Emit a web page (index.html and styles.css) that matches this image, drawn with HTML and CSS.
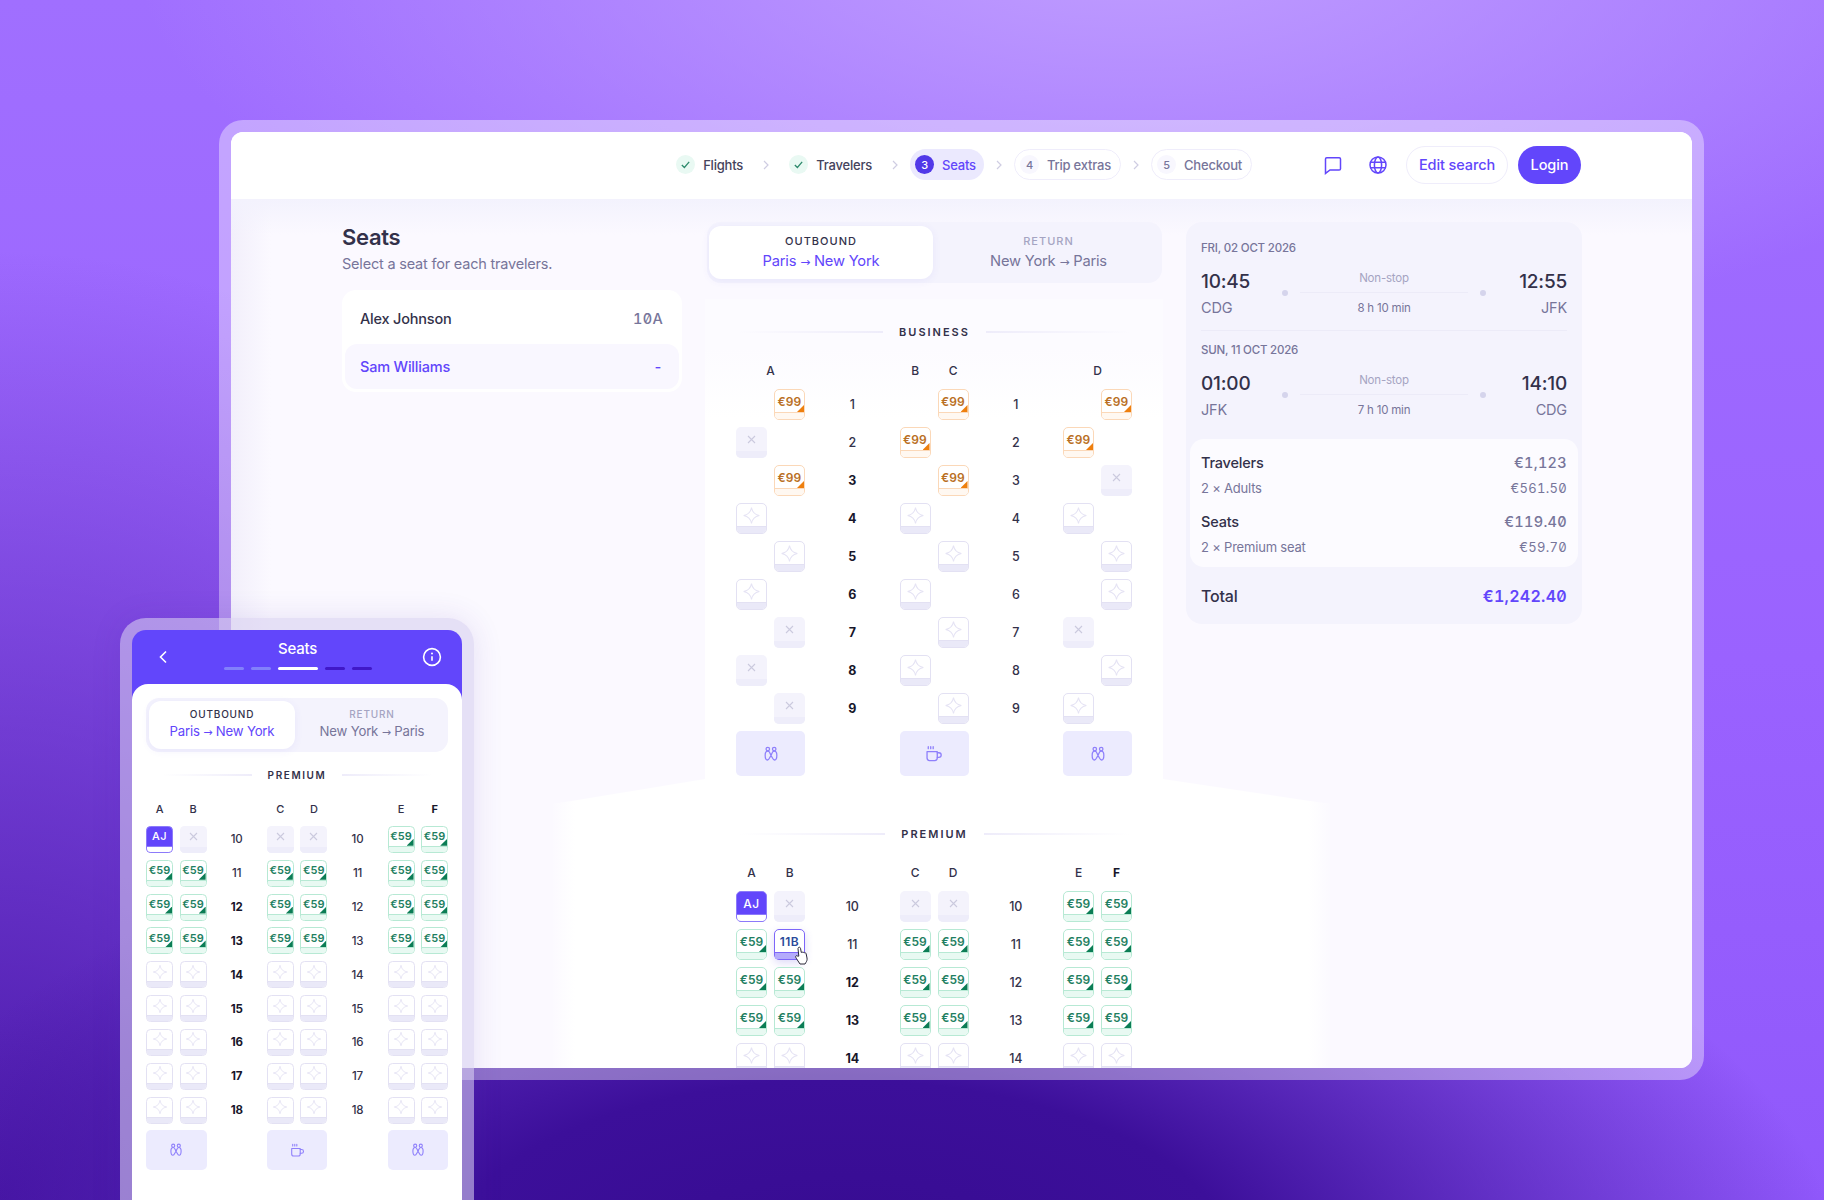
FILE: index.html
```html
<!DOCTYPE html>
<html lang="en">
<head>
    <meta charset="UTF-8">
    <meta name="viewport" content="width=device-width, initial-scale=1.0">
    <title>Seats</title>
    <link rel="stylesheet" href="styles.css">
</head>
<body>
    <div class="stage">
        <!-- desktop window -->
        <div class="window-frame">
            <div class="window">
                <header class="topbar">
                    <nav class="steps">
                        <div class="step done">
                            <span class="tick"><svg width="11" height="11" viewBox="0 0 12 12"><path d="M2 6.5l2.8 2.8L10 3.2"/></svg></span>
                            <span>Flights</span>
                        </div>
                        <svg class="chev" width="6" height="10" viewBox="0 0 6 10"><path d="M1 1l4 4-4 4"/></svg>
                        <div class="step done">
                            <span class="tick"><svg width="11" height="11" viewBox="0 0 12 12"><path d="M2 6.5l2.8 2.8L10 3.2"/></svg></span>
                            <span>Travelers</span>
                        </div>
                        <svg class="chev" width="6" height="10" viewBox="0 0 6 10"><path d="M1 1l4 4-4 4"/></svg>
                        <div class="step current">
                            <span class="step-no">3</span>
                            <span>Seats</span>
                        </div>
                        <svg class="chev" width="6" height="10" viewBox="0 0 6 10"><path d="M1 1l4 4-4 4"/></svg>
                        <div class="step todo">
                            <span class="step-no">4</span>
                            <span>Trip extras</span>
                        </div>
                        <svg class="chev" width="6" height="10" viewBox="0 0 6 10"><path d="M1 1l4 4-4 4"/></svg>
                        <div class="step todo">
                            <span class="step-no">5</span>
                            <span>Checkout</span>
                        </div>
                    </nav>
                    <div class="actions">
                        <svg class="action-icon" width="20" height="20" viewBox="0 0 20 20"><path d="M3.8 2.8h12.4a1.3 1.3 0 0 1 1.3 1.3v9.6a1.3 1.3 0 0 1-1.3 1.3H7l-4.5 3.4V4.1a1.3 1.3 0 0 1 1.3-1.3z"/></svg>
                        <svg class="action-icon" width="20" height="20" viewBox="0 0 20 20"><circle cx="10" cy="10" r="8"/><ellipse cx="10" cy="10" rx="3.6" ry="8"/><path d="M2.6 7.2h14.8M2.6 12.8h14.8"/></svg>
                        <button class="btn btn-line">Edit search</button>
                        <button class="btn btn-fill">Login</button>
                    </div>
                </header>

                <main class="content">
                    <div class="fuselage"></div>

                    <section class="travelers">
                        <h1>Seats</h1>
                        <p class="lead">Select a seat for each travelers.</p>
                        <div class="traveler-card">
                            <div class="traveler">
                                <span>Alex Johnson</span>
                                <span class="num-font">10A</span>
                            </div>
                            <div class="traveler active">
                                <span>Sam Williams</span>
                                <span class="num-font">-</span>
                            </div>
                        </div>
                    </section>

                    <section class="seatmap">
                        <div class="tabs">
                            <div class="tab active">
                                <span class="tab-label">OUTBOUND</span>
                                <span class="tab-route">Paris <span class="arrow">→</span> New York</span>
                            </div>
                            <div class="tab">
                                <span class="tab-label">RETURN</span>
                                <span class="tab-route">New York <span class="arrow">→</span> Paris</span>
                            </div>
                        </div>
                        <div class="cabin-title business-title"><span>BUSINESS</span></div>
                        <div class="deck" id="business"></div>
                        <div class="cabin-title premium-title"><span>PREMIUM</span></div>
                        <div class="deck" id="premium"></div>
                    </section>

                    <aside class="summary">
                        <div class="flight-date">FRI, 02 OCT 2026</div>
                        <div class="flight">
                            <div>
                                <div class="time">10:45</div>
                                <div class="code">CDG</div>
                            </div>
                            <div class="route">
                                <div class="nonstop">Non-stop</div>
                                <div class="route-line"><i></i><b></b><i></i></div>
                                <div class="duration">8 h 10 min</div>
                            </div>
                            <div class="end">
                                <div class="time">12:55</div>
                                <div class="code">JFK</div>
                            </div>
                        </div>
                        <div class="divider"></div>
                        <div class="flight-date second">SUN, 11 OCT 2026</div>
                        <div class="flight">
                            <div>
                                <div class="time">01:00</div>
                                <div class="code">JFK</div>
                            </div>
                            <div class="route">
                                <div class="nonstop">Non-stop</div>
                                <div class="route-line"><i></i><b></b><i></i></div>
                                <div class="duration">7 h 10 min</div>
                            </div>
                            <div class="end">
                                <div class="time">14:10</div>
                                <div class="code">CDG</div>
                            </div>
                        </div>
                        <div class="price-card">
                            <div class="price-row main"><span>Travelers</span><span class="num-font">€1,123</span></div>
                            <div class="price-row sub"><span>2 × Adults</span><span class="num-font">€561.50</span></div>
                            <div class="price-row main gap"><span>Seats</span><span class="num-font">€119.40</span></div>
                            <div class="price-row sub"><span>2 × Premium seat</span><span class="num-font">€59.70</span></div>
                        </div>
                        <div class="total"><span>Total</span><span class="num-font">€1,242.40</span></div>
                    </aside>
                </main>
            </div>
        </div>

        <!-- phone -->
        <div class="phone-frame">
            <div class="phone">
                <div class="phone-head">
                    <svg class="phone-back" width="10" height="14" viewBox="0 0 10 14"><path d="M8 1.5L2.5 7 8 12.5"/></svg>
                    <div class="phone-title">
                        <div>Seats</div>
                        <div class="progress"><i class="past"></i><i class="past"></i><i class="now"></i><i></i><i></i></div>
                    </div>
                    <svg class="phone-info" width="20" height="20" viewBox="0 0 20 20"><circle cx="10" cy="10" r="8.4"/><path d="M10 9.2v4.6"/><circle class="dot" cx="10" cy="6.4" r="1"/></svg>
                </div>
                <div class="phone-body">
                    <div class="tabs small">
                        <div class="tab active">
                            <span class="tab-label">OUTBOUND</span>
                            <span class="tab-route">Paris <span class="arrow">→</span> New York</span>
                        </div>
                        <div class="tab">
                            <span class="tab-label">RETURN</span>
                            <span class="tab-route">New York <span class="arrow">→</span> Paris</span>
                        </div>
                    </div>
                    <div class="cabin-title phone-cabin"><span>PREMIUM</span></div>
                    <div class="deck compact" id="phone-premium"></div>
                </div>
            </div>
        </div>
    </div>
    <script src="seats.js"></script>
</body>
</html>
```

FILE: styles.css
```css
:root {
    --purple: #6246fb;
    --ink: #33314a;
    --gray: #77759a;
    --light-gray: #a5a4c2;
    --panel: #f4f3fd;
}
* {
    box-sizing: border-box;
}
body {
    margin: 0;
    font-family: "Inter", "Liberation Sans", sans-serif;
    color: var(--ink);
    letter-spacing: -0.2px;
}
.stage {
    position: relative;
    width: 1824px;
    height: 1200px;
    overflow: hidden;
    background:
        radial-gradient(ellipse 1000px 480px at 46% 106%, #360b90 0%, #3c0f9a 40%, rgba(60, 15, 154, 0) 100%),
        radial-gradient(ellipse 800px 950px at 0% 100%, #4a18a8 0%, rgba(74, 24, 168, 0) 100%),
        radial-gradient(ellipse 1000px 420px at 62% -5%, #c09eff 0%, rgba(192, 158, 255, 0) 100%),
        linear-gradient(180deg, #a06fff 0%, #9a62ff 55%, #9058fb 100%);
}

/* windows on the backdrop */
.window-frame {
    position: absolute;
    left: 219px;
    top: 120px;
    width: 1485px;
    height: 960px;
    padding: 12px;
    border-radius: 24px;
    background: rgba(255, 255, 255, 0.38);
}
.window {
    height: 100%;
    border-radius: 12px;
    overflow: hidden;
    background: #fff;
    display: flex;
    flex-direction: column;
}
.phone-frame {
    position: absolute;
    left: 120px;
    top: 618px;
    width: 354px;
    height: 640px;
    padding: 12px;
    border-radius: 26px;
    background: rgba(213, 205, 240, 0.58);
    box-shadow: 0 0 30px rgba(70, 40, 170, 0.12);
}
.phone {
    height: 100%;
    border-radius: 14px;
    overflow: hidden;
    background: var(--purple);
}

/* top bar */
.topbar {
    height: 67px;
    flex: none;
    display: flex;
    align-items: center;
    justify-content: flex-end;
    padding: 0 111px 2px 0;
    background: #fff;
}
.steps {
    display: flex;
    align-items: center;
    gap: 12px;
    font-size: 13px;
    font-weight: 500;
}
.step {
    height: 31px;
    display: flex;
    align-items: center;
    gap: 8px;
    border-radius: 16px;
}
.step.done {
    padding: 0 8px;
    color: #45435c;
}
.tick {
    width: 19px;
    height: 19px;
    border-radius: 50%;
    background: #e9f9f3;
    display: flex;
    align-items: center;
    justify-content: center;
}
.tick path {
    fill: none;
    stroke: #2d8a6c;
    stroke-width: 1.4;
}
.chev path {
    fill: none;
    stroke: #cfcde2;
    stroke-width: 1.2;
}
.step-no {
    width: 19px;
    height: 19px;
    border-radius: 50%;
    display: flex;
    align-items: center;
    justify-content: center;
    font-size: 11px;
}
.step.current {
    padding: 0 8px 0 5px;
    background: #ebe9fe;
    color: var(--purple);
}
.step.current .step-no {
    background: #5138e8;
    color: #fff;
}
.step.todo {
    padding: 0 9px 0 5px;
    border: 1.5px solid #efedfb;
    color: var(--gray);
}
.step.todo .step-no {
    background: #f8f7fe;
}
.actions {
    display: flex;
    align-items: center;
    margin-left: 71px;
}
.action-icon {
    margin-right: 25px;
    fill: none;
    stroke: var(--purple);
    stroke-width: 1.5;
}
.action-icon + .btn {
    margin-left: -7px;
}
.btn {
    height: 38px;
    border-radius: 19px;
    font-family: inherit;
    font-size: 14.5px;
    font-weight: 500;
    letter-spacing: -0.1px;
}
.btn-line {
    width: 102px;
    margin-right: 10px;
    border: 1.5px solid #efedfb;
    background: #fff;
    color: var(--purple);
}
.btn-fill {
    width: 63px;
    border: none;
    background: var(--purple);
    color: #fff;
}

/* main area */
.content {
    flex: 1;
    position: relative;
    display: flex;
    align-items: flex-start;
    gap: 25px;
    padding: 23px 110px 0 111px;
    overflow: hidden;
    background:
        linear-gradient(180deg, #f3f2fd 0, rgba(243, 242, 253, 0) 36px),
        linear-gradient(90deg, #f2effb 0, rgba(242, 239, 251, 0) 40px),
        #fbf9ff;
}
.fuselage {
    position: absolute;
    left: 322px;
    top: 100px;
    width: 777px;
    height: 769px;
    clip-path: polygon(152px 0, 610px 0, 610px 480px, 777px 505px, 777px 769px, 0 769px, 0 505px, 152px 480px);
    background:
        linear-gradient(90deg, rgba(251, 249, 255, 0.9) 0, rgba(251, 249, 255, 0) 22px, rgba(251, 249, 255, 0) 755px, rgba(251, 249, 255, 0.9) 777px),
        linear-gradient(180deg, #fcfbff 0, #fcfbff 50px, #fff 120px);
}
.travelers,
.seatmap,
.summary {
    position: relative;
    flex: none;
}
.travelers {
    width: 340px;
}
.travelers h1 {
    margin: 0;
    height: 28px;
    margin-top: 1px;
    font-size: 22px;
    line-height: 28px;
    font-weight: 600;
    letter-spacing: -0.3px;
}
.lead {
    margin: 3px 0 16px;
    font-size: 14.5px;
    line-height: 20px;
    color: var(--gray);
    letter-spacing: -0.2px;
}
.traveler-card {
    padding: 3px;
    border-radius: 14px;
    background: #fff;
}
.traveler {
    height: 51px;
    padding: 0 16px 0 15px;
    display: flex;
    align-items: center;
    justify-content: space-between;
    font-size: 14.5px;
    font-weight: 500;
}
.traveler .num-font {
    color: var(--gray);
}
.traveler.active {
    height: 45px;
    border-radius: 12px;
    background: #f9f7ff;
    color: var(--purple);
}
.traveler.active .num-font {
    color: var(--purple);
}
.num-font {
    font-family: "Inter", "Liberation Sans", sans-serif;
    font-feature-settings: "tnum", "zero";
    letter-spacing: 0.3px;
}

/* outbound / return tabs */
.seatmap {
    width: 455px;
}
.tabs {
    height: 61px;
    padding: 4px 2px;
    display: flex;
    border-radius: 14px;
    background: var(--panel);
}
.tab {
    flex: 1;
    display: flex;
    flex-direction: column;
    align-items: center;
    justify-content: center;
    gap: 4px;
    padding-bottom: 1px;
    color: var(--gray);
}
.tab + .tab {
    padding-left: 4px;
}
.tab.active {
    flex: none;
    width: 224px;
    border-radius: 12px;
    background: #fff;
    box-shadow: 0 2px 8px rgba(90, 70, 220, 0.07);
    color: var(--purple);
}
.tab-label {
    font-size: 11px;
    line-height: 14px;
    font-weight: 500;
    letter-spacing: 1px;
    color: var(--light-gray);
}
.tab.active .tab-label {
    color: var(--ink);
}
.tab-route {
    font-size: 14.7px;
    line-height: 18px;
}
.arrow {
    font-family: "DejaVu Sans", sans-serif;
    font-size: 12px;
}
.tabs.small {
    height: 54px;
    padding: 3px;
    border-radius: 13px;
}
.tabs.small .tab {
    gap: 3px;
}
.tabs.small .tab.active {
    width: 146px;
}
.tabs.small .tab-label {
    font-size: 10px;
    line-height: 12px;
    letter-spacing: 0.8px;
}
.tabs.small .tab-route {
    font-size: 13.2px;
    line-height: 17px;
}
.tabs.small .arrow {
    font-size: 11px;
}

/* cabin title */
.cabin-title {
    height: 14px;
    display: flex;
    align-items: center;
    justify-content: center;
    gap: 16px;
    font-size: 11px;
    font-weight: 600;
    letter-spacing: 2px;
}
.cabin-title::before,
.cabin-title::after {
    content: "";
    width: 145px;
    height: 1.5px;
}
.cabin-title::before {
    background: linear-gradient(90deg, rgba(238, 236, 250, 0), #eeecfa);
}
.cabin-title::after {
    background: linear-gradient(90deg, #eeecfa, rgba(238, 236, 250, 0));
}
.business-title {
    margin-top: 42px;
    margin-bottom: 19px;
}
.premium-title {
    margin-top: 51px;
    margin-bottom: 19px;
}
.phone-cabin {
    margin: 16px 0 17px;
    font-size: 10px;
    letter-spacing: 1.6px;
}
.phone-cabin::before,
.phone-cabin::after {
    width: 90px;
}

/* seat grid */
.deck {
    width: 396px;
    margin-left: 29px;
    display: grid;
    grid-template-columns: 31px 31px 80.5px 31px 31px 80.5px 31px 31px;
    gap: 7px;
}
.deck.compact {
    width: 302px;
    margin-left: 0;
    grid-template-columns: 27px 27px 47px 27px 27px 47px 27px 27px;
    column-gap: 6.6px;
    row-gap: 6.85px;
}
.letter,
.row-no {
    display: flex;
    align-items: center;
    justify-content: center;
    font-size: 12px;
    font-weight: 500;
}
.letter {
    height: 24px;
}
.compact .letter {
    height: 20px;
    font-size: 11px;
}
.row-no {
    font-size: 12.5px;
}
.compact .row-no {
    font-size: 11.5px;
}
.strong {
    color: #17162a;
    font-weight: 700;
}
.span-2 {
    grid-column: span 2;
}
.seat {
    position: relative;
    height: 31px;
    display: flex;
    flex-direction: column;
    border: 1.5px solid #e3e1f3;
    border-radius: 5px;
    background: #fff;
    overflow: hidden;
}
.seat-face {
    flex: 1;
    position: relative;
    display: flex;
    align-items: center;
    justify-content: center;
    font-size: 12px;
    font-weight: 600;
    letter-spacing: 0.1px;
}
.seat-band {
    height: 7px;
    flex: none;
    border-top: 1.5px solid #e3e1f3;
    background: #eae9f8;
}
.compact .seat {
    height: 27px;
    border-radius: 4.5px;
}
.compact .seat-band {
    height: 6px;
}
.compact .seat-face {
    font-size: 11px;
}
.star {
    width: 21px;
    height: 21px;
    fill: none;
    stroke: #e5e3f4;
    stroke-width: 1.2;
}
.compact .star {
    width: 18px;
    height: 18px;
}
.seat.taken {
    border: none;
    background: #f4f3fc;
}
.seat.taken .seat-band {
    border: none;
    background: #eeedfa;
}
.cross {
    fill: none;
    stroke: #cbcade;
    stroke-width: 1.1;
}
.seat.priced .seat-face::after {
    content: "";
    position: absolute;
    right: 0;
    bottom: 0;
    width: 7px;
    height: 7px;
    clip-path: polygon(100% 0, 100% 100%, 0 100%);
    background: currentColor;
}
.seat.orange {
    border-color: #fbd8b8;
}
.seat.orange .seat-band {
    border-color: #fbd8b8;
    background: #fff8f1;
}
.seat.orange .seat-face {
    color: #b96f24;
}
.seat.orange .seat-face::after {
    background: #ee7f0e;
}
.seat.green {
    border-color: #b7e9d4;
}
.seat.green .seat-band {
    border-color: #b7e9d4;
    background: #e8f9f2;
}
.seat.green .seat-face {
    color: #1f7f62;
}
.seat.green .seat-face::after {
    background: #0b7d55;
}
.seat.mine {
    border-color: #8c7afa;
    background: var(--purple);
}
.seat.mine .seat-band {
    border-color: #8c7afa;
    background: #fff;
}
.seat.mine .seat-face {
    color: #fff;
    font-weight: 500;
    letter-spacing: 0.5px;
}
.seat.hover {
    border-color: #7d66f9;
    box-shadow: 0 3px 8px rgba(90, 70, 220, 0.2);
    overflow: visible;
}
.seat.hover .seat-band {
    border-color: #7d66f9;
    background: #b4abfb;
}
.seat.hover .seat-face {
    color: #2b4a9a;
    letter-spacing: 0.5px;
}
.seat-slot {
    position: relative;
}
.cursor {
    position: absolute;
    left: 20px;
    top: 17px;
}
.cursor path {
    fill: #fff;
    stroke: #2a2838;
    stroke-width: 1;
    stroke-linejoin: round;
}
.amenity {
    grid-column: span 2;
    height: 45px;
    border-radius: 5px;
    background: #ecebfe;
    display: flex;
    align-items: center;
    justify-content: center;
}
.amenity svg {
    width: 16px;
    height: 16px;
    fill: none;
    stroke: #8f80fb;
    stroke-width: 1.6;
    stroke-linecap: round;
    stroke-linejoin: round;
}
.amenity .cup {
    width: 18px;
    height: 18px;
}
.compact .amenity {
    height: 40px;
}
.compact .amenity svg {
    width: 14px;
    height: 14px;
}
.compact .amenity .cup {
    width: 15px;
    height: 15px;
}

/* trip summary */
.summary {
    width: 396px;
    margin-left: -1px;
    padding: 18px 15px 16px;
    border-radius: 16px;
    background: var(--panel);
}
.flight-date {
    height: 16px;
    margin-bottom: 14px;
    font-size: 11.5px;
    line-height: 16px;
    font-weight: 500;
    color: var(--gray);
}
.flight-date.second {
    margin-top: 11px;
}
.flight {
    display: grid;
    grid-template-columns: 1fr 204px 1fr;
}
.time {
    height: 24px;
    font-size: 19px;
    line-height: 24px;
    font-weight: 500;
}
.code {
    height: 20px;
    margin-top: 4px;
    font-size: 14.5px;
    line-height: 20px;
    color: var(--gray);
}
.end {
    text-align: right;
}
.route {
    display: flex;
    flex-direction: column;
    align-items: center;
    font-size: 11.5px;
}
.nonstop {
    height: 16px;
    line-height: 16px;
    color: var(--light-gray);
}
.route-line {
    width: 100%;
    height: 7px;
    margin-top: 3px;
    display: flex;
    align-items: center;
    gap: 12px;
}
.route-line i {
    width: 6px;
    height: 6px;
    border-radius: 50%;
    background: #d5d4ec;
}
.route-line b {
    flex: 1;
    height: 1.5px;
    background: #ecebf8;
}
.duration {
    margin-top: 3px;
    height: 18px;
    line-height: 18px;
    color: var(--gray);
}
.divider {
    height: 1px;
    margin-top: 12px;
    background: #ecebf8;
}
.price-card {
    margin: 19px -11px 0;
    padding: 14px 11px 10px;
    border-radius: 14px;
    background: #fcfbff;
}
.price-row {
    display: flex;
    justify-content: space-between;
    line-height: 20px;
}
.price-row.main {
    font-size: 14.5px;
    font-weight: 500;
}
.price-row.main .num-font {
    color: var(--gray);
}
.price-row.sub {
    margin-top: 5px;
    font-size: 13px;
    color: var(--gray);
}
.price-row.gap {
    margin-top: 14px;
}
.total {
    margin-top: 17px;
    display: flex;
    justify-content: space-between;
    font-size: 16px;
    line-height: 24px;
    font-weight: 500;
}
.total .num-font {
    color: var(--purple);
    font-weight: 600;
}

/* phone */
.phone-head {
    height: 54px;
    display: flex;
    justify-content: space-between;
    padding: 20px 20px 0 26px;
    color: #fff;
}
.phone-back path,
.phone-info path,
.phone-info circle {
    fill: none;
    stroke: #fff;
    stroke-width: 1.6;
}
.phone-info .dot {
    fill: #fff;
    stroke: none;
}
.phone-info {
    margin-top: -3px;
}
.phone-title {
    margin-top: -11px;
    margin-left: 5px;
    text-align: center;
    font-size: 15px;
    line-height: 20px;
    font-weight: 500;
}
.progress {
    margin-top: 8px;
    display: flex;
    gap: 7px;
}
.progress i {
    width: 20px;
    height: 3px;
    border-radius: 2px;
    background: #4018c8;
}
.progress .past {
    background: #8280fb;
}
.progress .now {
    width: 40px;
    background: #fff;
}
.phone-body {
    height: 600px;
    padding: 14px 14px 0;
    border-radius: 16px 16px 0 0;
    background: #fff;
}
```

FILE: seats.js
```js
// Seat maps: each row is one char per seat column (A..F)
// . = no seat, o = €99, g = €59, e = free, x = taken, s = mine, h = hovered
const businessRows = [
    ['1', '.o.o.o'], ['2', 'x.o.o.'], ['3', '.o.o.x'],
    ['4', 'e.e.e.'], ['5', '.e.e.e'], ['6', 'e.e..e'],
    ['7', '.x.ex.'], ['8', 'x.e..e'], ['9', '.x.ee.']
];
const premiumRows = [
    ['10', 'sxxxgg'], ['11', 'ghgggg'], ['12', 'gggggg'],
    ['13', 'gggggg'], ['14', 'eeeeee']
];
const phoneRows = [
    ['10', 'sxxxgg'], ['11', 'gggggg'], ['12', 'gggggg'], ['13', 'gggggg'],
    ['14', 'eeeeee'], ['15', 'eeeeee'], ['16', 'eeeeee'], ['17', 'eeeeee'], ['18', 'eeeeee']
];

// row numbers in the first aisle that are drawn heavier
const strongRows = ['3', '4', '5', '6', '7', '8', '9', '12', '13', '14', '15', '16', '17', '18'];

const starSvg = '<svg class="star" viewBox="0 0 24 24"><path d="M12 3c1 5.5 3.5 8 9 9-5.5 1-8 3.5-9 9-1-5.5-3.5-8-9-9 5.5-1 8-3.5 9-9z"/></svg>';
const crossSvg = '<svg class="cross" width="9" height="9" viewBox="0 0 9 9"><path d="M1 1l7 7M8 1l-7 7"/></svg>';
const cursorSvg = '<svg class="cursor" width="15" height="19" viewBox="0 0 15 19"><path d="M4.5 1.5c.8-.6 1.8-.2 2 .8l.8 4.2c.5-.5 1.3-.5 1.7.1.5-.4 1.3-.3 1.6.3.6-.3 1.3 0 1.5.7l.9 4.4c.3 1.7-.1 3-1 4.3l-1 1.7H6l-3.8-5.8c-.6-1-.8-1.8-.2-2.3.5-.4 1.2-.2 1.8.4l1-.2L4 2.6c-.1-.4.1-.8.5-1.1z"/></svg>';
const toiletSvg = '<svg viewBox="0 0 20 20"><circle cx="6" cy="3.8" r="2.2"/><circle cx="14" cy="3.8" r="2.2"/><path d="M6 6.5c-2.5 0-3.3 2.2-3.3 5 0 3.5.8 6 2.8 6 2.2 0 3-4 4.5-5.5 1.5 1.5 2.3 5.5 4.5 5.5 2 0 2.8-2.5 2.8-6 0-2.8-.8-5-3.3-5-2.6 0-2.8 3-4 5.5-1.2-2.5-1.4-5.5-4-5.5z"/></svg>';
const coffeeSvg = '<svg class="cup" viewBox="0 0 22 22"><path d="M4 2v2.5M7 2v2.5M10 2v2.5"/><path d="M2.5 8h12.5v8a3 3 0 0 1-3 3H5.5a3 3 0 0 1-3-3V8z"/><path d="M15 9.5h2a2.8 2.8 0 0 1 0 5.6h-2"/></svg>';

function makeSeat(type) {
    if (type === '.') return '<div></div>';
    let cls = 'seat';
    let face = '';
    if (type === 'o') { cls += ' priced orange'; face = '€99'; }
    if (type === 'g') { cls += ' priced green'; face = '€59'; }
    if (type === 'e') { face = starSvg; }
    if (type === 'x') { cls += ' taken'; face = crossSvg; }
    if (type === 's') { cls += ' mine'; face = 'AJ'; }
    if (type === 'h') {
        return '<div class="seat-slot"><div class="seat hover"><div class="seat-face">11B</div><div class="seat-band"></div></div>' + cursorSvg + '</div>';
    }
    return '<div class="' + cls + '"><div class="seat-face">' + face + '</div><div class="seat-band"></div></div>';
}

function makeRow(row) {
    const no = row[0];
    const s = row[1].split('').map(makeSeat);
    const strong = strongRows.includes(no) ? ' strong' : '';
    return s[0] + s[1] +
        '<div class="row-no' + strong + '">' + no + '</div>' +
        s[2] + s[3] +
        '<div class="row-no">' + no + '</div>' +
        s[4] + s[5];
}

function letterRow(letters) {
    return letters.map(function (l) {
        if (l === '') return '<div class="letter"></div>';
        const strong = l === 'F' ? ' strong' : '';
        return '<div class="letter' + strong + '">' + l + '</div>';
    }).join('');
}

const amenities = '<div class="amenity">' + toiletSvg + '</div><div></div>' +
    '<div class="amenity">' + coffeeSvg + '</div><div></div>' +
    '<div class="amenity">' + toiletSvg + '</div>';

const allLetters = letterRow(['A', 'B', '', 'C', 'D', '', 'E', 'F']);

document.getElementById('business').innerHTML =
    '<div class="letter span-2">A</div><div class="letter"></div><div class="letter">B</div><div class="letter">C</div><div class="letter"></div><div class="letter span-2">D</div>' +
    businessRows.map(makeRow).join('') + amenities;

document.getElementById('premium').innerHTML = allLetters + premiumRows.map(makeRow).join('');

document.getElementById('phone-premium').innerHTML = allLetters + phoneRows.map(makeRow).join('') + amenities;
```
